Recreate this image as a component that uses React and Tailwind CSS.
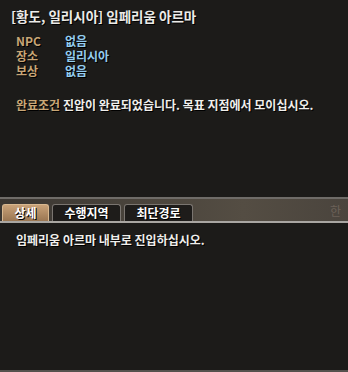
import React from 'react';

const info = [
  { label: 'NPC', value: '없음' },
  { label: '장소', value: '일리시아' },
  { label: '보상', value: '없음' },
];

const tabs = ['상세', '수행지역', '최단경로'];

const App = () => {
  return (
    <div className="w-[348px] h-[372px] bg-[#1c1b19] flex flex-col overflow-hidden font-['Noto_Sans_CJK_KR',sans-serif] font-bold [text-shadow:1px_1px_0_#000] border-b-2 border-[#55524e]">
      {/* Quest info */}
      <div className="h-[197px] px-[11px] pt-[7px]">
        <h1 className="text-[13.5px] leading-[18px] text-[#ecebe8] font-bold">
          [황도, 일리시아] 임페리움 아르마
        </h1>
        <div className="mt-[8px] pl-[5px] grid grid-cols-[49px_1fr] text-[12px] leading-[15px]">
          {info.map((row) => (
            <React.Fragment key={row.label}>
              <span className="text-[#c8a676]">{row.label}</span>
              <span className="text-[#93cdef]">{row.value}</span>
            </React.Fragment>
          ))}
        </div>
        <p className="mt-[19px] pl-[5px] text-[12px] leading-[15px] text-[#f0efec]">
          <span className="text-[#c8a676]">완료조건</span> 진압이 완료되었습니다. 목표 지점에서 모이십시오.
        </p>
      </div>

      {/* Tab bar */}
      <div className="h-[26px] border-t-2 border-[#6f6c68] border-b-2 border-b-[#a9a6a2] bg-[linear-gradient(90deg,#3a3631,#4a443c_40%,#544d43_70%,#4a443d)] flex items-end gap-[3px] pl-[2px] relative">
        {tabs.map((tab, i) => (
          <div
            key={tab}
            className={
              i === 0
                ? 'h-[17px] w-[47px] rounded-t-[3px] border border-b-0 border-[#d8b890] bg-[linear-gradient(#c9a278,#9a7652)] text-white text-[12px] leading-[16px] text-center'
                : 'h-[17px] w-[69px] rounded-t-[3px] border border-b-0 border-[#7a7570] bg-[#1e1c1a] text-white text-[12px] leading-[16px] text-center'
            }
          >
            {tab}
          </div>
        ))}
        <span className="absolute right-[7px] bottom-[2px] text-[12px] leading-[16px] font-normal text-[#6b6158] [text-shadow:none]">한</span>
      </div>

      {/* Detail */}
      <div className="px-[16px] pt-[9px]">
        <p className="text-[12px] leading-[15px] text-[#f0efec]">
          임페리움 아르마 내부로 진입하십시오.
        </p>
      </div>
    </div>
  );
};

export default App;
